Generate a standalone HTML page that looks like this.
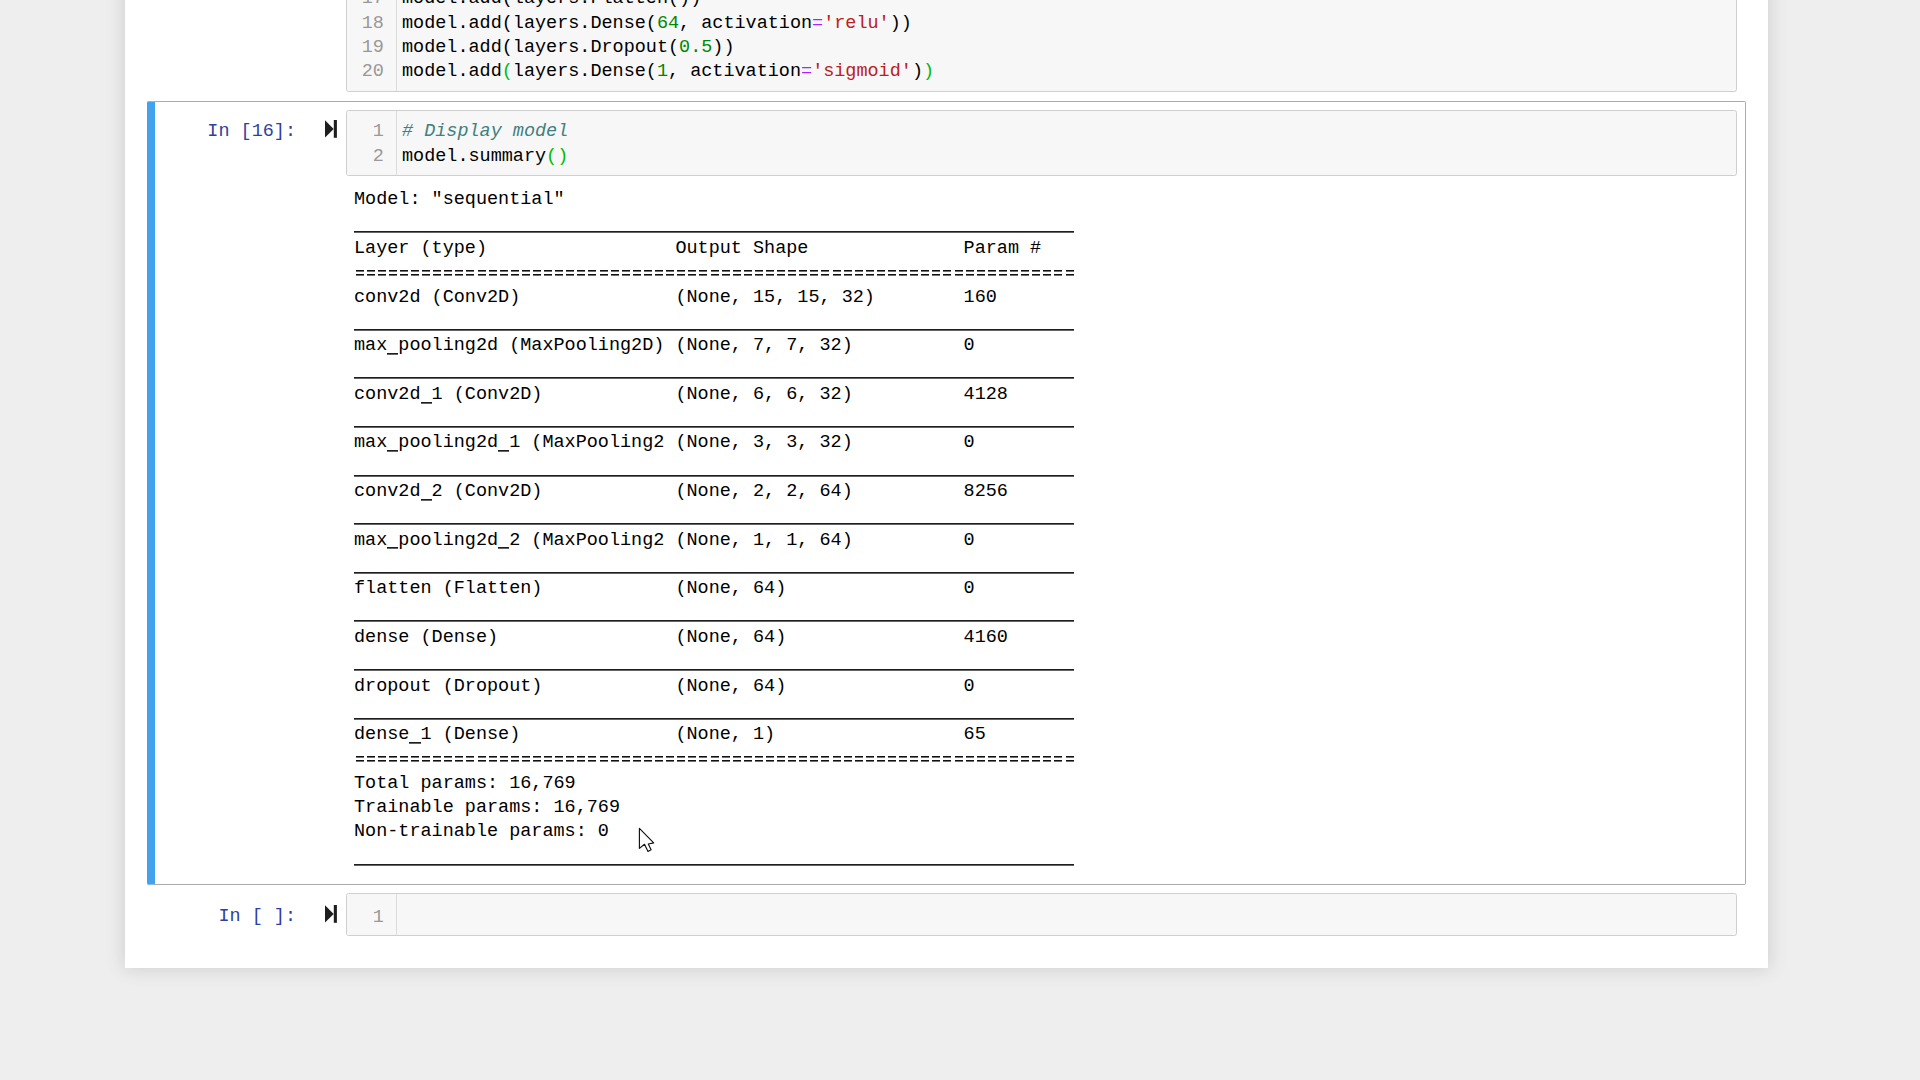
<!DOCTYPE html>
<html><head><meta charset="utf-8">
<style>
html,body{margin:0;padding:0;}
body{width:1920px;height:1080px;overflow:hidden;background:#eeeeee;position:relative;font-family:"Liberation Mono",monospace;}
.abs{position:absolute;}
#container{left:125px;top:-60px;width:1643px;height:1028px;background:#fff;box-shadow:0 0 17px 1px rgba(87,87,87,0.2);}
.inp{position:absolute;background:#f7f7f7;border:1px solid #cfcfcf;border-radius:2.5px;box-sizing:border-box;overflow:hidden;}
.gut{position:absolute;left:0;top:0;bottom:0;width:49px;background:#f7f7f7;border-right:1px solid #ddd;}
pre{margin:0;position:absolute;font-family:"Liberation Mono",monospace;font-size:18.48px;line-height:24.31px;white-space:pre;color:#000;}
.ln{color:#999;text-align:right;}
.prompt{color:#303F9F;text-align:right;}
.num{color:#080;}
.str{color:#BA2121;}
.op{color:#AA22FF;}
.cm{color:#408080;font-style:italic;}
.mb{color:#0b0;}
#sel{left:147px;top:101px;width:1599px;height:784px;box-sizing:border-box;border:1px solid #ababab;border-left:8px solid #42A2EE;border-radius:2px;}
.run{position:absolute;width:12px;height:18px;}
.u{color:transparent;background:linear-gradient(#1e1e1e,#1e1e1e) 0 17.8px/100% 1.7px no-repeat;}
i.e{font-style:normal;color:transparent;background-image:linear-gradient(#111,#111),linear-gradient(#111,#111);background-size:8.1px 1.6px;background-position:1.5px 7.3px,1.5px 11.3px;background-repeat:no-repeat;}
</style></head><body>
<div id="container" class="abs"></div>

<!-- previous cell input -->
<div class="inp" style="left:346px;top:-40px;width:1391px;height:132px;"><div class="gut"></div></div>
<pre class="ln" style="left:350.8px;top:-12.7px;width:33px;">17
18
19
20</pre>
<pre style="left:402px;top:-12.7px;">model.add(layers.Flatten())
model.add(layers.Dense(<span class="num">64</span>, activation<span class="op">=</span><span class="str">'relu'</span>))
model.add(layers.Dropout(<span class="num">0.5</span>))
model.add<span class="mb">(</span>layers.Dense(<span class="num">1</span>, activation<span class="op">=</span><span class="str">'sigmoid'</span>)<span class="mb">)</span></pre>

<!-- selected cell -->
<div id="sel" class="abs"></div>
<pre class="prompt" style="left:200px;top:120.3px;width:96px;">In [16]:</pre>
<svg class="run" style="left:325px;top:120px;" viewBox="0 0 12 18"><path d="M0 0.2 L8.7 8.9 L0 17.6 Z" fill="#1e1e1e"/><rect x="8.8" y="0" width="3.1" height="17.8" fill="#1e1e1e"/></svg>
<div class="inp" style="left:346px;top:110px;width:1391px;height:66px;"><div class="gut"></div></div>
<pre class="ln" style="left:350.8px;top:120.2px;width:33px;">1
2</pre>
<pre style="left:402px;top:120.2px;"><span class="cm"># Display model</span>
model.summary<span class="mb">()</span></pre>

<pre style="left:354px;top:188.3px;">Model: "sequential"
<span class="u">_________________________________________________________________</span>
Layer (type)                 Output Shape              Param #   
<i class="e">=</i><i class="e">=</i><i class="e">=</i><i class="e">=</i><i class="e">=</i><i class="e">=</i><i class="e">=</i><i class="e">=</i><i class="e">=</i><i class="e">=</i><i class="e">=</i><i class="e">=</i><i class="e">=</i><i class="e">=</i><i class="e">=</i><i class="e">=</i><i class="e">=</i><i class="e">=</i><i class="e">=</i><i class="e">=</i><i class="e">=</i><i class="e">=</i><i class="e">=</i><i class="e">=</i><i class="e">=</i><i class="e">=</i><i class="e">=</i><i class="e">=</i><i class="e">=</i><i class="e">=</i><i class="e">=</i><i class="e">=</i><i class="e">=</i><i class="e">=</i><i class="e">=</i><i class="e">=</i><i class="e">=</i><i class="e">=</i><i class="e">=</i><i class="e">=</i><i class="e">=</i><i class="e">=</i><i class="e">=</i><i class="e">=</i><i class="e">=</i><i class="e">=</i><i class="e">=</i><i class="e">=</i><i class="e">=</i><i class="e">=</i><i class="e">=</i><i class="e">=</i><i class="e">=</i><i class="e">=</i><i class="e">=</i><i class="e">=</i><i class="e">=</i><i class="e">=</i><i class="e">=</i><i class="e">=</i><i class="e">=</i><i class="e">=</i><i class="e">=</i><i class="e">=</i><i class="e">=</i>
conv2d (Conv2D)              (None, 15, 15, 32)        160       
<span class="u">_________________________________________________________________</span>
max<span class="u">_</span>pooling2d (MaxPooling2D) (None, 7, 7, 32)          0         
<span class="u">_________________________________________________________________</span>
conv2d<span class="u">_</span>1 (Conv2D)            (None, 6, 6, 32)          4128      
<span class="u">_________________________________________________________________</span>
max<span class="u">_</span>pooling2d<span class="u">_</span>1 (MaxPooling2 (None, 3, 3, 32)          0         
<span class="u">_________________________________________________________________</span>
conv2d<span class="u">_</span>2 (Conv2D)            (None, 2, 2, 64)          8256      
<span class="u">_________________________________________________________________</span>
max<span class="u">_</span>pooling2d<span class="u">_</span>2 (MaxPooling2 (None, 1, 1, 64)          0         
<span class="u">_________________________________________________________________</span>
flatten (Flatten)            (None, 64)                0         
<span class="u">_________________________________________________________________</span>
dense (Dense)                (None, 64)                4160      
<span class="u">_________________________________________________________________</span>
dropout (Dropout)            (None, 64)                0         
<span class="u">_________________________________________________________________</span>
dense<span class="u">_</span>1 (Dense)              (None, 1)                 65        
<i class="e">=</i><i class="e">=</i><i class="e">=</i><i class="e">=</i><i class="e">=</i><i class="e">=</i><i class="e">=</i><i class="e">=</i><i class="e">=</i><i class="e">=</i><i class="e">=</i><i class="e">=</i><i class="e">=</i><i class="e">=</i><i class="e">=</i><i class="e">=</i><i class="e">=</i><i class="e">=</i><i class="e">=</i><i class="e">=</i><i class="e">=</i><i class="e">=</i><i class="e">=</i><i class="e">=</i><i class="e">=</i><i class="e">=</i><i class="e">=</i><i class="e">=</i><i class="e">=</i><i class="e">=</i><i class="e">=</i><i class="e">=</i><i class="e">=</i><i class="e">=</i><i class="e">=</i><i class="e">=</i><i class="e">=</i><i class="e">=</i><i class="e">=</i><i class="e">=</i><i class="e">=</i><i class="e">=</i><i class="e">=</i><i class="e">=</i><i class="e">=</i><i class="e">=</i><i class="e">=</i><i class="e">=</i><i class="e">=</i><i class="e">=</i><i class="e">=</i><i class="e">=</i><i class="e">=</i><i class="e">=</i><i class="e">=</i><i class="e">=</i><i class="e">=</i><i class="e">=</i><i class="e">=</i><i class="e">=</i><i class="e">=</i><i class="e">=</i><i class="e">=</i><i class="e">=</i><i class="e">=</i>
Total params: 16,769
Trainable params: 16,769
Non-trainable params: 0
<span class="u">_________________________________________________________________</span></pre>

<!-- empty cell -->
<pre class="prompt" style="left:200px;top:904.5px;width:96px;">In [ ]:</pre>
<svg class="run" style="left:325px;top:905px;" viewBox="0 0 12 18"><path d="M0 0.2 L8.7 8.9 L0 17.6 Z" fill="#1e1e1e"/><rect x="8.8" y="0" width="3.1" height="17.8" fill="#1e1e1e"/></svg>
<div class="inp" style="left:346px;top:893px;width:1391px;height:43px;"><div class="gut"></div></div>
<pre class="ln" style="left:350.8px;top:905.6px;width:33px;">1</pre>

<svg class="abs" style="left:638px;top:827px;" width="18" height="26" viewBox="0 0 18 26"><path d="M1.4 1.4 L1.4 21.4 L6.5 17.3 L10 24.4 L13.1 22.8 L10.3 17 L15.7 15.9 Z" fill="#fff" stroke="#111" stroke-width="1.15" stroke-linejoin="round"/></svg>
</body></html>
